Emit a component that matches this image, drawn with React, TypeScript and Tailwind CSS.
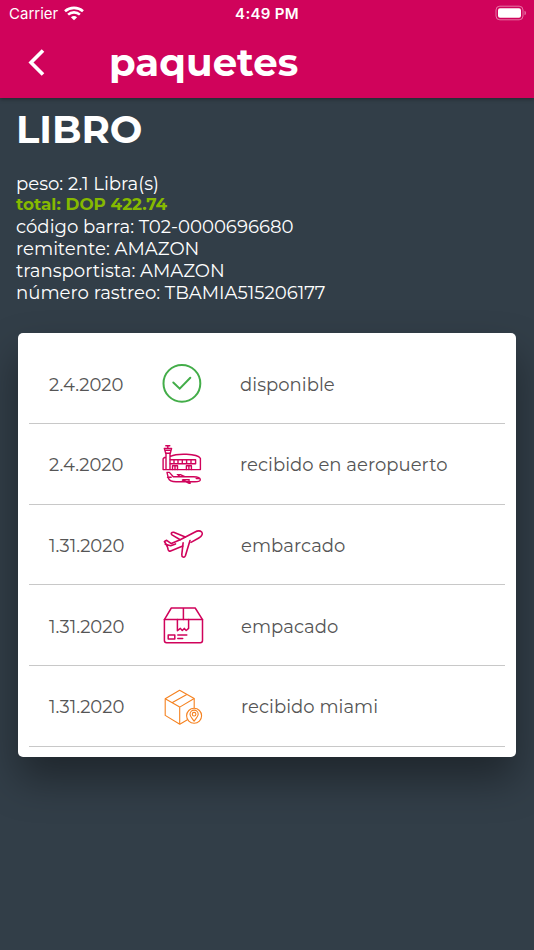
import type { ReactNode } from "react";

interface Step {
  date: string;
  label: string;
  icon: ReactNode;
}

function CheckIcon() {
  return (
    <svg width="60" height="60" viewBox="0 0 60 60" fill="none" stroke="#43ad49" strokeWidth="2" strokeLinecap="round">
      <circle cx="29.9" cy="28.4" r="18.4" />
      <path d="M21.3 27.5 L27.7 33.6 L38.3 22.7" />
    </svg>
  );
}

function AirportIcon() {
  return (
    <svg width="60" height="60" viewBox="0 0 60 60" fill="none" stroke="#d0035b" strokeWidth="1.4" strokeLinejoin="round" strokeLinecap="round">
      <path d="M13.8 9.7H17.8 M15.8 9.7V12 M12.3 12.4H19.6L18.3 17.2H13.7Z M12.8 14.3H19" />
      <path d="M14 17.3V33.6 M18 17.3V33.6 M11.1 33.6V23.2Q11.1 21.6 14 21.2 M11.1 33.6H48.4V22.3C45 17.4 25 17.2 18.4 20.4" />
      <path d="M18.3 23.8H43.6V27.8H18.3 M22 23.8V27.8 M26 23.8V27.8 M30.3 23.8V27.8 M34.6 23.8V27.8 M39 23.8V27.8" />
      <path d="M20.5 33.5V29.7H25.5V33.5 M23 29.7V33.5 M34.4 33.5V29.7H39.4V33.5 M36.9 29.7V33.5" />
      <path d="M15 36.4H17.4L21.3 40.8H41.5C45.5 40.8 48.2 42.2 48.3 43.7C48.2 45.3 45.5 45.8 43 45.8H24C20 45.8 17 44 16.4 42.3Z M15.5 41.3H19.2 M25.3 38.6H28.4L32.8 40.7 M26 38.8L28 40.8 M31.3 43.8H37.2 M30.4 44L36.8 47.2H38.2L36.8 44 M44.2 42.5H47.4" />
    </svg>
  );
}

function PlaneIcon() {
  return (
    <svg width="60" height="60" viewBox="0 0 60 60" fill="none" stroke="#d0035b" strokeWidth="1.6" strokeLinejoin="round" strokeLinecap="round">
      <path d="M39 26.4L46.8 22C50.3 20 51 17.4 49.7 16C48.2 14.6 45.2 14.8 42.6 16.2L28.2 23.7L19.3 27.6L14.7 24.3L12.4 25.5L15.3 30.4" />
      <path d="M13.3 28.2L18.7 29.7L23.5 27.9 M15.3 30.4L16.2 33.8Q16.8 35.6 18.6 34.9L30.8 30.1" />
      <path d="M33.3 20.9L21.7 16.3C19.5 16 18.5 17.6 20 18.9L28.2 23.7" />
      <path d="M31.1 26.8L29.8 38.6C29.6 41.3 32.3 42.2 33.4 39.7L38 24.5" />
    </svg>
  );
}

function BoxIcon() {
  return (
    <svg width="60" height="60" viewBox="0 0 60 60" fill="none" stroke="#d0035b" strokeWidth="1.5" strokeLinejoin="round" strokeLinecap="round">
      <path d="M12.4 22.6H50.5V43.6Q50.5 45.8 48.3 45.8H14.6Q12.4 45.8 12.4 43.6Z" />
      <path d="M12.4 22.6L19.3 11H43.2L50.5 22.6 M31.4 11V22.6" />
      <path d="M25.4 22.6V33.7L28.4 31.4L30.3 33.5L32.3 31.4L34.2 33.5L36.6 31.4V22.6" />
      <path d="M16.2 38.1H22.8V42.1H16.2Z M25.8 38.1H34.8 M25.8 41.4H30.7" />
    </svg>
  );
}

function MiamiIcon() {
  return (
    <svg width="60" height="60" viewBox="0 0 60 60" fill="none" stroke="#f58220" strokeWidth="1.1" strokeLinejoin="round">
      <path d="M35.4 41.8L27.8 46.2L13.2 37.4V20.8L27.6 12.3L42.2 20.5V30.2" />
      <path d="M13.2 20.8L27.7 29.1L42.2 20.5 M27.7 29.1V46 M20.4 24.6L34.8 16.4" />
      <circle cx="42.1" cy="37.8" r="7.5" />
      <path d="M42.1 43.2C40.2 40.2 38 38.5 38 36.2A4.1 4.1 0 0 1 46.2 36.2C46.2 38.5 44 40.2 42.1 43.2Z" />
      <circle cx="42.1" cy="36.2" r="1.8" />
    </svg>
  );
}

const steps: Step[] = [
  { date: "2.4.2020", label: "disponible", icon: <CheckIcon /> },
  { date: "2.4.2020", label: "recibido en aeropuerto", icon: <AirportIcon /> },
  { date: "1.31.2020", label: "embarcado", icon: <PlaneIcon /> },
  { date: "1.31.2020", label: "empacado", icon: <BoxIcon /> },
  { date: "1.31.2020", label: "recibido miami", icon: <MiamiIcon /> },
];

function StatusBar() {
  return (
    <div className="grid h-7 grid-cols-3 items-center pl-2 pr-2 font-[Inter,sans-serif] text-[15px]">
      <div className="flex items-center gap-[6px] pl-px">
        <span>Carrier</span>
        <svg className="relative -top-px" width="20" height="15" viewBox="0 0 20 15" fill="none" stroke="#fff" strokeWidth="2.6">
          <path d="M1 5.2C6 0.7 14 0.7 19 5.2 M4.1 8.6C7.4 5.6 12.6 5.6 15.9 8.6" />
          <path d="M10 14.2L6.9 11.2Q10 8.7 13.1 11.2Z" fill="#fff" stroke="none" />
        </svg>
      </div>
      <span className="text-center font-semibold tracking-[0.3px]">4:49 PM</span>
      <svg className="relative -top-px justify-self-end" width="31" height="16" viewBox="0 0 31 16">
        <rect x="1" y="1.2" width="27" height="13.6" rx="3.8" fill="none" stroke="#fff" strokeOpacity="0.45" />
        <rect x="3" y="3.2" width="23" height="9.6" rx="2" fill="#fff" />
        <path d="M29.5 5.8Q31 6.3 31 8T29.5 10.2Z" fill="#fff" fillOpacity="0.45" />
      </svg>
    </div>
  );
}

export default function App() {
  return (
    <div className="flex h-[950px] w-full flex-col overflow-hidden bg-[#323e48] font-[Montserrat,Inter,sans-serif] text-white">
      <header className="h-[98px] shrink-0 bg-[#d0035b] shadow-[0_1px_4px_rgba(0,0,0,0.4)]">
        <StatusBar />
        <div className="flex h-[68px] items-center">
          <svg className="mb-px ml-[27px]" width="20" height="30" viewBox="0 0 20 30" fill="none" stroke="#fff" strokeWidth="3.6">
            <path d="M16 3.5L4 15.5L16 27.5" />
          </svg>
          <h1 className="ml-[62px] pt-[2px] text-[38.7px] font-bold leading-none">paquetes</h1>
        </div>
      </header>

      <main className="flex flex-col">
        <section className="px-4 pt-[10px]">
          <h2 className="text-[38.6px] font-bold leading-[44px]">LIBRO</h2>
          <div className="mt-[21px] text-[18.1px] leading-[22px]">
            <p className="leading-[21px]">peso: 2.1 Libra(s)</p>
            <p className="text-[16.8px] font-bold leading-[21.6px] text-[#86b900]">total: DOP 422.74</p>
            <p>código barra: T02-0000696680</p>
            <p>remitente: AMAZON</p>
            <p>transportista: AMAZON</p>
            <p>número rastreo: TBAMIA515206177</p>
          </div>
        </section>

        <section className="mx-[18px] mt-[29.4px] h-[424.5px] rounded-[5px] bg-white px-[11px] pt-[10.4px] text-[18px] text-[#555] shadow-[0_22px_40px_rgba(0,0,0,0.38)]">
          {steps.map((step) => (
            <div key={step.label} className="flex h-[80.7px] items-center border-b border-[#c8c8c8] pt-[3.8px]">
              <span className="w-[123px] pl-5">{step.date}</span>
              {step.icon}
              <span className={step.date.startsWith("1.31") ? "ml-[29px] tracking-[0.05px]" : "ml-7 tracking-[0.05px]"}>
                {step.label}
              </span>
            </div>
          ))}
        </section>
      </main>
    </div>
  );
}
